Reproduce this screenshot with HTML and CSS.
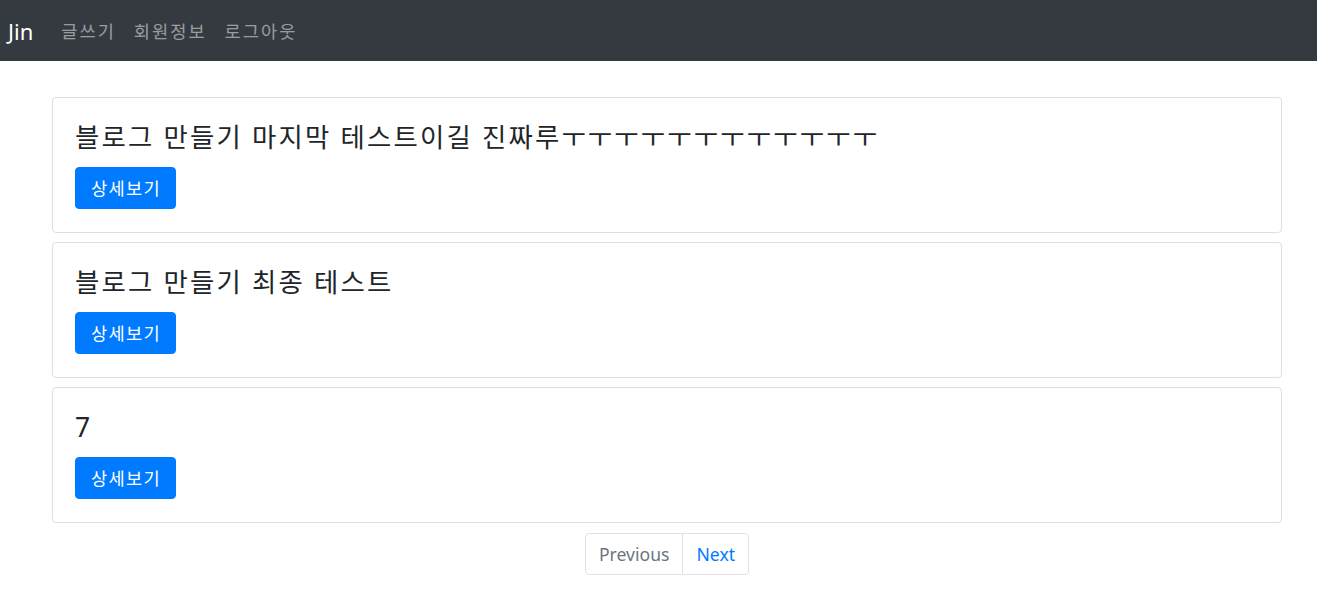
FILE: index.html
```html
<!DOCTYPE html>
<html lang="ko">
<head>
    <meta charset="UTF-8">
    <meta name="viewport" content="width=device-width, initial-scale=1.0">
    <title>Jin 블로그</title>
    <link rel="stylesheet" href="styles.css">
</head>
<body>

    <nav class="navbar">
        <a class="navbar-brand" href="#">Jin</a>
        <ul class="navbar-nav">
            <li><a class="nav-link" href="#">글쓰기</a></li>
            <li><a class="nav-link" href="#">회원정보</a></li>
            <li><a class="nav-link" href="#">로그아웃</a></li>
        </ul>
    </nav>

    <div class="container">
        <div class="card">
            <div class="card-body">
                <h4 class="card-title">블로그 만들기 마지막 테스트이길 진짜루ㅜㅜㅜㅜㅜㅜㅜㅜㅜㅜㅜㅜ</h4>
                <a href="#" class="btn">상세보기</a>
            </div>
        </div>
        <div class="card">
            <div class="card-body">
                <h4 class="card-title">블로그 만들기 최종 테스트</h4>
                <a href="#" class="btn">상세보기</a>
            </div>
        </div>
        <div class="card">
            <div class="card-body">
                <h4 class="card-title">7</h4>
                <a href="#" class="btn">상세보기</a>
            </div>
        </div>

        <ul class="pagination">
            <li class="page-item disabled"><a class="page-link" href="#">Previous</a></li>
            <li class="page-item"><a class="page-link" href="#">Next</a></li>
        </ul>
    </div>

</body>
</html>
```

FILE: styles.css
```css
        * {
            box-sizing: border-box;
        }
        body {
            margin: 0;
            font-family: "Noto Sans", "Noto Sans CJK KR", sans-serif;
            font-size: 17.6px;
            color: #212529;
            background: #fff;
        }
        a {
            text-decoration: none;
        }
        .navbar {
            display: flex;
            align-items: center;
            height: 61px;
            padding: 0 8px;
            background-color: #343a40;
        }
        .navbar-brand {
            color: #fff;
            font-size: 22px;
            margin-right: 28px;
        }
        .navbar-nav {
            display: flex;
            list-style: none;
            margin: 0;
            padding: 0;
            gap: 18px;
        }
        .nav-link {
            color: rgba(255, 255, 255, 0.5);
            letter-spacing: 2px;
        }
        .container {
            width: 1230px;
            margin: 36px 0 0 52px;
        }
        .card {
            border: 1px solid rgba(0, 0, 0, 0.125);
            border-radius: 4px;
            margin-bottom: 9px;
        }
        .card-body {
            padding: 22px 22px 23px;
        }
        .card-title {
            font-size: 26.4px;
            font-weight: 400;
            line-height: 34px;
            letter-spacing: 2.2px;
            margin: 0 0 13px;
        }
        .btn {
            display: inline-block;
            height: 42px;
            line-height: 40px;
            padding: 0 14px 0 15px;
            color: #fff;
            background-color: #007bff;
            border: 1px solid #007bff;
            border-radius: 4px;
            letter-spacing: 1.3px;
        }
        .pagination {
            display: flex;
            justify-content: center;
            list-style: none;
            margin: 10px 0 0;
            padding: 0;
        }
        .page-link {
            display: block;
            height: 42px;
            line-height: 40px;
            padding: 0 13px;
            color: #007bff;
            border: 1px solid #dee2e6;
        }
        .page-item:first-child .page-link {
            border-radius: 4px 0 0 4px;
        }
        .page-item:last-child .page-link {
            margin-left: -1px;
            border-radius: 0 4px 4px 0;
        }
        .page-item.disabled .page-link {
            color: #6c757d;
        }
```
